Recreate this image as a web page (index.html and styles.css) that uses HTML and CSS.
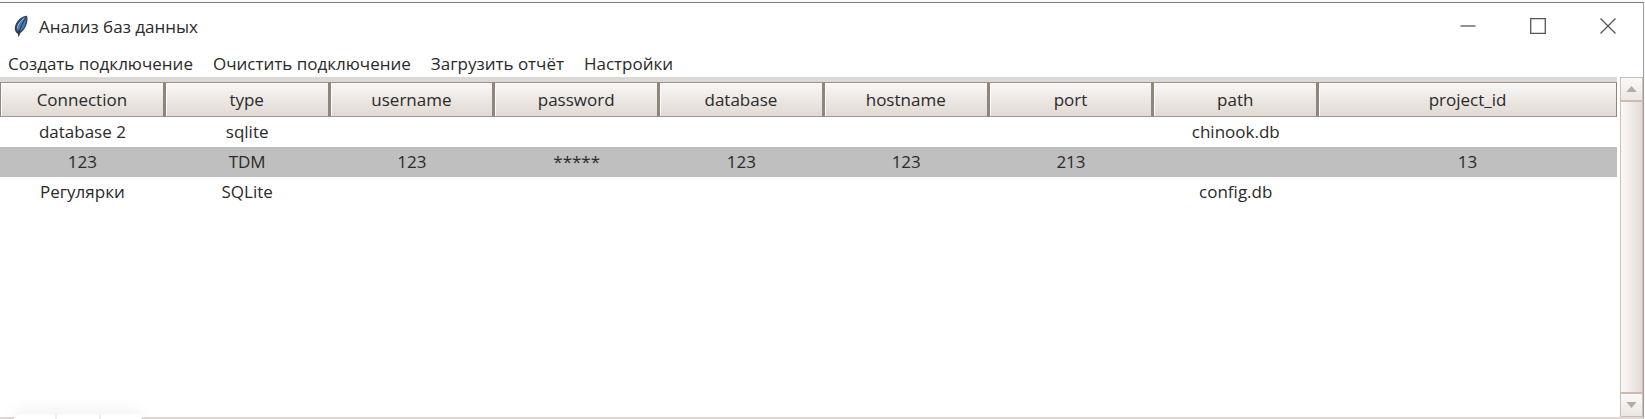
FILE: index.html
```
<!DOCTYPE html>
<html lang="ru">
<head>
    <meta charset="UTF-8">
    <title>Анализ баз данных</title>
    <link rel="stylesheet" href="styles.css">
</head>
<body>
    <div class="window">
        <header class="titlebar">
            <svg class="app-icon" viewBox="0 0 16 24">
                <path d="M14 0.500C8 0.500 1 7 0.800 14C0.800 16.500 2 18.500 3.800 19.500L5 23.500L6.800 19C12.500 15 15.500 7 14 0.500Z" fill="#39434f"/>
                <path d="M12.500 2C7 4 3 10 3 16L7.500 16.500C11.500 13 13.500 7 12.500 2Z" fill="#3f7cc4"/>
                <path d="M11 3C7 6 4 10 3.500 14" fill="none" stroke="#a9c4e2" stroke-width="1"/>
                <path d="M12.500 3C9 8 6 14 5 21" fill="none" stroke="#1d2b3c" stroke-width="1"/>
            </svg>
            <h1 class="title">Анализ баз данных</h1>
            <div class="window-buttons">
                <button class="window-btn" aria-label="Свернуть">
                    <svg viewBox="0 0 16 16"><path d="M0.500 8H15.500"/></svg>
                </button>
                <button class="window-btn" aria-label="Развернуть">
                    <svg viewBox="0 0 16 16"><path d="M0.700 0.700H15.300V15.300H0.700Z"/></svg>
                </button>
                <button class="window-btn" aria-label="Закрыть">
                    <svg viewBox="0 0 16 16"><path d="M0.500 0.500L15.500 15.500M15.500 0.500L0.500 15.500"/></svg>
                </button>
            </div>
        </header>
        <nav class="menu">
            <button class="menu-item">Создать подключение</button>
            <button class="menu-item">Очистить подключение</button>
            <button class="menu-item">Загрузить отчёт</button>
            <button class="menu-item">Настройки</button>
        </nav>
        <main class="content">
            <div class="table-area">
                <table class="connections">
                    <thead>
                        <tr>
                            <th>Connection</th>
                            <th>type</th>
                            <th>username</th>
                            <th>password</th>
                            <th>database</th>
                            <th>hostname</th>
                            <th>port</th>
                            <th>path</th>
                            <th class="last">project_id</th>
                        </tr>
                    </thead>
                    <tbody>
                        <tr>
                            <td>database 2</td>
                            <td>sqlite</td>
                            <td></td>
                            <td></td>
                            <td></td>
                            <td></td>
                            <td></td>
                            <td>chinook.db</td>
                            <td></td>
                        </tr>
                        <tr class="selected">
                            <td>123</td>
                            <td>TDM</td>
                            <td>123</td>
                            <td>*****</td>
                            <td>123</td>
                            <td>123</td>
                            <td>213</td>
                            <td></td>
                            <td>13</td>
                        </tr>
                        <tr>
                            <td>Регулярки</td>
                            <td>SQLite</td>
                            <td></td>
                            <td></td>
                            <td></td>
                            <td></td>
                            <td></td>
                            <td>config.db</td>
                            <td></td>
                        </tr>
                    </tbody>
                </table>
            </div>
            <div class="scrollbar">
                <button class="scroll-btn" aria-label="Вверх">
                    <svg viewBox="0 0 12 7"><path d="M6 0L12 7H0Z"/></svg>
                </button>
                <div class="scroll-thumb"></div>
                <button class="scroll-btn" aria-label="Вниз">
                    <svg viewBox="0 0 12 7"><path d="M0 0H12L6 7Z"/></svg>
                </button>
            </div>
        </main>
    </div>
    <div class="float-panel">
        <span></span>
        <span></span>
        <span></span>
    </div>
</body>
</html>
```

FILE: styles.css
```
* {
    box-sizing: border-box;
}
body {
    margin: 0;
    height: 100vh;
    padding: 2px 1px 0 0;
    overflow: hidden;
    background-color: #fafafa;
    color: #2a2a2a;
    font-family: "Open Sans", "Noto Sans", sans-serif;
    font-size: 17px;
}
button {
    margin: 0;
    padding: 0;
    border: none;
    background: none;
    color: inherit;
    font: inherit;
}
.window {
    height: 100%;
    display: flex;
    flex-direction: column;
    border-top: 1px solid #7d7d7d;
    border-right: 1px solid #a09c9c;
    border-bottom: 2px solid #dcd9d5;
    background-color: #fff;
}
.titlebar {
    display: flex;
    align-items: center;
    height: 46px;
    padding-left: 14px;
}
.app-icon {
    width: 15px;
    height: 23px;
}
.title {
    flex: 1;
    margin: 0 0 0 10px;
    font-size: 17px;
    font-weight: 400;
}
.window-buttons {
    display: flex;
}
.window-btn {
    display: flex;
    align-items: center;
    justify-content: center;
    width: 70px;
    height: 44px;
}
.window-btn svg {
    width: 16px;
    height: 16px;
    fill: none;
    stroke: #555;
    stroke-width: 1.300;
}
.menu {
    display: flex;
    align-items: center;
    gap: 20px;
    height: 28px;
    padding-left: 8px;
}
.content {
    flex: 1;
    display: flex;
    min-height: 0;
    gap: 3px;
}
.table-area {
    flex: 1;
    border-top: 5px solid #dcd9d5;
}
.connections {
    width: 100%;
    table-layout: fixed;
    border-collapse: separate;
    border-spacing: 0;
    line-height: 24px;
    text-align: center;
}
.connections th {
    width: 10.19%;
    height: 35px;
    padding: 0;
    border: 1px solid #9c8f87;
    border-right-color: #8f8578;
    border-left-color: #8f8578;
    border-bottom-color: #a3948c;
    background: linear-gradient(#f9f7f6, #e1d9d3);
    box-shadow: inset 1px 1px #fff;
    font-weight: 400;
}
.connections th:not(.last) {
    border-right-width: 2px;
}
.connections th.last {
    width: auto;
}
.connections td {
    height: 30px;
    padding: 0;
}
.connections .selected td {
    background-color: #bfbfbf;
}
.scrollbar {
    display: flex;
    flex-direction: column;
    width: 23px;
    border: 1px solid #cdbfb6;
    background-color: #f4f0ee;
}
.scroll-btn {
    display: flex;
    align-items: center;
    justify-content: center;
    height: 22px;
    background: linear-gradient(#fbf9f8, #ebe6e2);
}
.scroll-btn svg {
    width: 11px;
    height: 6px;
    fill: #b0aca8;
}
.scroll-thumb {
    flex: 1;
    border-top: 2px solid #cdbab0;
    border-bottom: 2px solid #cdbab0;
    background: linear-gradient(to right, #faf8f7, #e3dcd7);
}
/* panel peeking out from the bottom edge */
.float-panel {
    position: absolute;
    left: 14px;
    bottom: 0;
    display: flex;
    width: 128px;
    height: 5px;
    border-radius: 8px 8px 0 0 / 5px 5px 0 0;
    background-color: #fff;
    box-shadow: 0 0 16px rgba(0, 0, 0, 0.15);
}
.float-panel span {
    flex: 1;
}
.float-panel span + span {
    border-left: 2px solid #eee;
}
```
